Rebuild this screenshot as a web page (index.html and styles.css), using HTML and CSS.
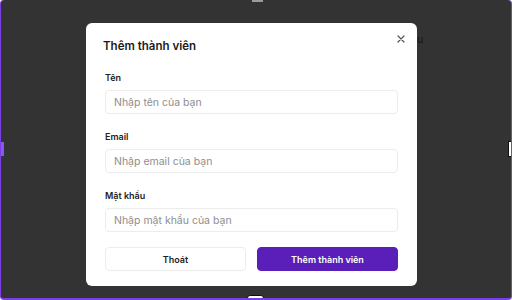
FILE: index.html
```html
<!DOCTYPE html>
<html lang="vi">
<head>
  <meta charset="UTF-8" />
  <meta name="viewport" content="width=device-width, initial-scale=1.0"/>
  <title>Thêm thành viên</title>
  <link rel="stylesheet" href="styles.css">
</head>
<body>

  <div class="frame">
    <!-- page behind the overlay -->
    <div class="page-bg">
      <span class="page-text">Đu</span>
    </div>

    <div class="modal">
      <div class="modal-header">
        <h2>Thêm thành viên</h2>
        <button class="close-btn" aria-label="Đóng">
          <svg width="8" height="8" viewBox="0 0 8 8">
            <path d="M1 1 L7 7 M7 1 L1 7" stroke="#555" stroke-width="1.2" stroke-linecap="round"/>
          </svg>
        </button>
      </div>

      <form class="modal-form">
        <div class="form-group">
          <label for="name">Tên</label>
          <input type="text" id="name" placeholder="Nhập tên của bạn" />
        </div>

        <div class="form-group">
          <label for="email">Email</label>
          <input type="email" id="email" placeholder="Nhập email của bạn" />
        </div>

        <div class="form-group">
          <label for="password">Mật khẩu</label>
          <input type="password" id="password" placeholder="Nhập mật khẩu của bạn" />
        </div>

        <div class="actions">
          <button type="button" class="btn btn-secondary">Thoát</button>
          <button type="submit" class="btn btn-primary">Thêm thành viên</button>
        </div>
      </form>
    </div>

    <!-- selection handles -->
    <span class="handle handle-top"></span>
    <span class="handle handle-bottom"></span>
    <span class="handle handle-left"></span>
    <span class="handle handle-right"></span>
  </div>

</body>
</html>
```

FILE: styles.css
```css
* {
  box-sizing: border-box;
}

body {
  margin: 0;
  background-color: #ffffff;
  font-family: Inter, "Noto Sans", sans-serif;
}

.frame {
  position: relative;
  width: 512px;
  height: 300px;
  background-color: #333333;
  border-left: 1px solid #7b3fe4;
  border-right: 1px solid #7b3fe4;
  border-bottom: 2px solid #7b3fe4;
  border-radius: 4px;
  display: flex;
  padding: 23px 0 0 85px;
  overflow: hidden;
}

.page-bg {
  position: absolute;
  top: 27px;
  left: 409px;
}

.page-text {
  font-size: 10px;
  color: #141414;
}

/* Modal */
.modal {
  position: relative;
  width: 331px;
  height: 263px;
  background-color: white;
  border-radius: 6px;
  padding: 12px 19px 0 19px;
}

.modal-header {
  display: flex;
  justify-content: space-between;
  align-items: flex-start;
  margin-left: -2px;
}

.modal-header h2 {
  margin: 3px 0 0 0;
  font-size: 11.5px;
  line-height: 16px;
  font-weight: 600;
  color: #1a1a1a;
}

.close-btn {
  border: none;
  background: none;
  padding: 0;
  margin: -1px -8px 0 0;
  width: 10px;
  height: 10px;
  display: flex;
  align-items: center;
  justify-content: center;
  cursor: pointer;
}

.modal-form {
  margin-top: 18px;
  display: flex;
  flex-direction: column;
}

.form-group {
  display: flex;
  flex-direction: column;
  margin-bottom: 17px;
}

.form-group label {
  font-size: 9px;
  font-weight: 600;
  color: #222;
  line-height: 12px;
  margin-bottom: 6px;
}

.form-group input {
  height: 24px;
  border: 1px solid #ececec;
  border-radius: 4px;
  padding: 0 8px;
  font-family: inherit;
  font-size: 10.5px;
  color: #222;
  outline: none;
}

.form-group input::placeholder {
  color: #8e8e8e;
}

.actions {
  display: flex;
  gap: 11px;
  margin-top: -2px;
}

.btn {
  flex: 1;
  height: 24px;
  border-radius: 4px;
  font-family: inherit;
  font-size: 9px;
  font-weight: 600;
  cursor: pointer;
}

.btn-secondary {
  background-color: white;
  border: 1px solid #ececec;
  color: #222;
}

.btn-primary {
  background-color: #5a1fb8;
  border: 1px solid #5a1fb8;
  color: white;
}

/* Selection handles */
.handle {
  position: absolute;
  display: block;
}

.handle-top {
  top: 0;
  left: 251px;
  width: 11px;
  height: 2px;
  background-color: #9a9a9a;
}

.handle-bottom {
  bottom: -2px;
  left: 246px;
  width: 17px;
  height: 5px;
  background-color: white;
  border: 1px solid #111;
  border-radius: 3px 3px 0 0;
}

.handle-left {
  top: 142px;
  left: -1px;
  width: 4px;
  height: 14px;
  background-color: #8b54f5;
}

.handle-right {
  top: 141px;
  right: -1px;
  width: 4px;
  height: 16px;
  background-color: white;
  border: 1px solid #111;
  border-right: none;
}
```
